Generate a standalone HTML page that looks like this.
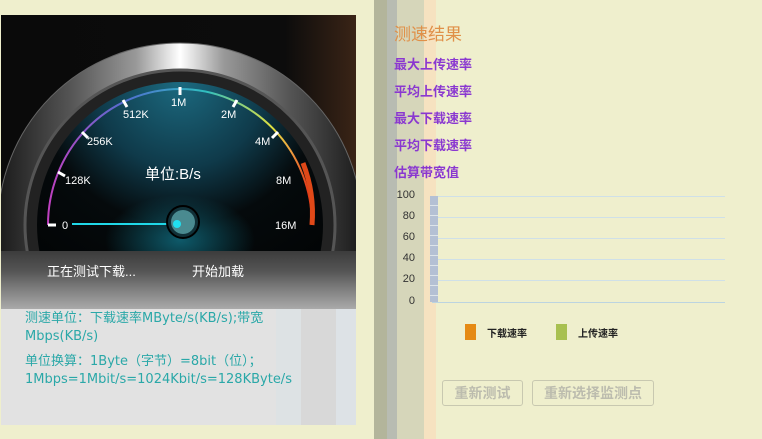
<!DOCTYPE html>
<html><head><meta charset="utf-8"><style>
body{margin:0;width:762px;height:439px;background:#efefcd;position:relative;overflow:hidden;font-family:"Liberation Sans","Noto Sans CJK SC",sans-serif}
.a{position:absolute}
.item{position:absolute;left:394px;color:#8a38d0;font-weight:bold;font-size:13px}
.yl{position:absolute;width:20px;text-align:right;left:395px;font-size:11px;color:#333}
.gl{position:absolute;left:432px;width:293px;height:1px;background:#cfe0e8}
.btn{position:absolute;top:380px;height:24px;border:1px solid #c8c8b0;border-radius:3px;color:#bcbcae;font-weight:bold;font-size:14px;text-align:center;line-height:24px}
.tt{position:absolute;left:24px;color:#2aa8a8;font-size:13px;line-height:18px;font-family:"DejaVu Sans","Noto Sans CJK SC",sans-serif}
</style></head><body>
<div class="a" style="left:374px;top:0;width:13px;height:439px;background:#b3b59b"></div>
<div class="a" style="left:387px;top:0;width:10px;height:439px;background:#b8bcb2"></div>
<div class="a" style="left:397px;top:0;width:27px;height:439px;background:#d6d6ba"></div>
<div class="a" style="left:424px;top:0;width:12px;height:439px;background:#f6e2c0"></div>

<div class="a" style="left:1px;top:15px;width:355px;height:410px;background:#e2e2e2;overflow:hidden">
<div class="a" style="left:275px;top:0;width:25px;height:410px;background:#dde2e4"></div>
<div class="a" style="left:300px;top:0;width:35px;height:410px;background:#d8d8d8"></div>
<div class="a" style="left:335px;top:0;width:20px;height:410px;background:#dde2e6"></div>
<svg class="a" style="left:0;top:0" width="355" height="236" viewBox="1 15 355 236">
<defs>
<linearGradient id="bg" x1="0" x2="1"><stop offset="0" stop-color="#0a0a0a"/><stop offset=".8" stop-color="#0c0c0c"/><stop offset="1" stop-color="#3a2416"/></linearGradient>
<linearGradient id="sil" x1="0" x2="1"><stop offset="0" stop-color="#1a1a1a"/><stop offset=".2" stop-color="#555"/><stop offset=".38" stop-color="#999"/><stop offset=".5" stop-color="#fff"/><stop offset=".62" stop-color="#999"/><stop offset=".8" stop-color="#555"/><stop offset="1" stop-color="#1a1a1a"/></linearGradient>
<radialGradient id="face" cx=".5" cy="0" r="1"><stop offset="0" stop-color="#1c6a80"/><stop offset=".3" stop-color="#0f3a4a"/><stop offset=".5" stop-color="#050a0c"/><stop offset="1" stop-color="#000"/></radialGradient>
<linearGradient id="arc" x1="0" x2="1"><stop offset="0" stop-color="#c040c0"/><stop offset=".3" stop-color="#5070d0"/><stop offset=".6" stop-color="#30c0c0"/><stop offset=".85" stop-color="#e0e040"/><stop offset=".92" stop-color="#f0a040"/><stop offset="1" stop-color="#e02010"/></linearGradient>
<radialGradient id="glow" cx=".5" cy=".5" r=".5"><stop offset="0" stop-color="#0e5a6a"/><stop offset="1" stop-color="#0e5a6a" stop-opacity="0"/></radialGradient>
</defs>
<rect x="1" y="15" width="355" height="236" fill="url(#bg)"/>
<circle cx="180" cy="225" r="182" fill="url(#sil)" stroke="#666"/>
<circle cx="180" cy="225" r="155" fill="#222" stroke="#555" stroke-width="3"/>
<circle cx="180" cy="225" r="143" fill="url(#face)"/>
<ellipse cx="180" cy="240" rx="75" ry="45" fill="url(#glow)"/>
<path d="M48 225 A132 136 0 0 1 312 225" fill="none" stroke="url(#arc)" stroke-width="2"/>
<path d="M303 163 A132 136 0 0 1 312 225" fill="none" stroke="#e04818" stroke-width="5"/>
<g stroke="#fff" stroke-width="3">
<line x1="48" y1="225" x2="56" y2="225"/><line x1="58" y1="172" x2="65" y2="176"/><line x1="82" y1="132" x2="88" y2="138"/><line x1="123" y1="100" x2="127" y2="107"/><line x1="180" y1="87" x2="180" y2="95"/><line x1="237" y1="100" x2="233" y2="107"/><line x1="278" y1="132" x2="272" y2="138"/>
</g>
<g fill="#fff" font-size="11" font-family="Liberation Sans,sans-serif">
<text x="62" y="229">0</text><text x="65" y="184">128K</text><text x="87" y="145">256K</text><text x="123" y="118">512K</text><text x="171" y="106">1M</text><text x="221" y="118">2M</text><text x="255" y="145">4M</text><text x="276" y="184">8M</text><text x="275" y="229">16M</text>
</g>
<text x="145" y="179" fill="#fff" font-size="15" font-family="Liberation Sans,Noto Sans CJK SC,sans-serif">单位:B/s</text>
<line x1="72" y1="224" x2="178" y2="224" stroke="#20d8e8" stroke-width="2"/>
<circle cx="183" cy="222" r="16" fill="#103038" stroke="#000" stroke-width="2"/>
<circle cx="183" cy="222" r="12" fill="#4a8a90"/>
<circle cx="177" cy="224" r="4" fill="#20e0f0"/>
</svg>
<div class="a" style="left:0;top:236px;width:355px;height:58px;background:linear-gradient(#3c3c3c,#555 35%,#777 60%,#aaa)"></div>
<div class="a" style="left:46px;top:246px;color:#fff;font-size:13px">正在测试下载...</div>
<div class="a" style="left:191px;top:246px;color:#fff;font-size:13px">开始加载</div>
<div class="tt" style="top:295px;width:265px">测速单位：下载速率MByte/s(KB/s);带宽Mbps(KB/s)</div>
<div class="tt" style="top:338px;width:300px">单位换算：1Byte（字节）=8bit（位）；1Mbps=1Mbit/s=1024Kbit/s=128KByte/s</div>
</div>

<div class="a" style="left:394px;top:20px;color:#e09048;font-size:17px">测速结果</div>
<div class="item" style="top:54px">最大上传速率</div>
<div class="item" style="top:81px">平均上传速率</div>
<div class="item" style="top:108px">最大下载速率</div>
<div class="item" style="top:135px">平均下载速率</div>
<div class="item" style="top:162px">估算带宽值</div>

<div class="gl" style="top:196px"></div><div class="gl" style="top:217px"></div><div class="gl" style="top:238px"></div><div class="gl" style="top:259px"></div><div class="gl" style="top:280px"></div><div class="gl" style="top:302px;background:#bcd4e0"></div>
<div class="yl" style="top:189px">100</div><div class="yl" style="top:210px">80</div><div class="yl" style="top:231px">60</div><div class="yl" style="top:252px">40</div><div class="yl" style="top:273px">20</div><div class="yl" style="top:295px">0</div>
<div class="a" style="left:430px;top:196px;width:8px;height:106px;background:repeating-linear-gradient(#b4c0d4 0 9px,#dde4ea 9px 10px)"></div>
<div class="a" style="left:465px;top:324px;width:11px;height:16px;background:#e58a14"></div>
<div class="a" style="left:487px;top:325px;font-size:10px;font-weight:bold;color:#222">下载速率</div>
<div class="a" style="left:556px;top:324px;width:11px;height:16px;background:#a8c050"></div>
<div class="a" style="left:578px;top:325px;font-size:10px;font-weight:bold;color:#222">上传速率</div>
<div class="btn" style="left:442px;width:79px">重新测试</div>
<div class="btn" style="left:532px;width:120px">重新选择监测点</div>
</body></html>
